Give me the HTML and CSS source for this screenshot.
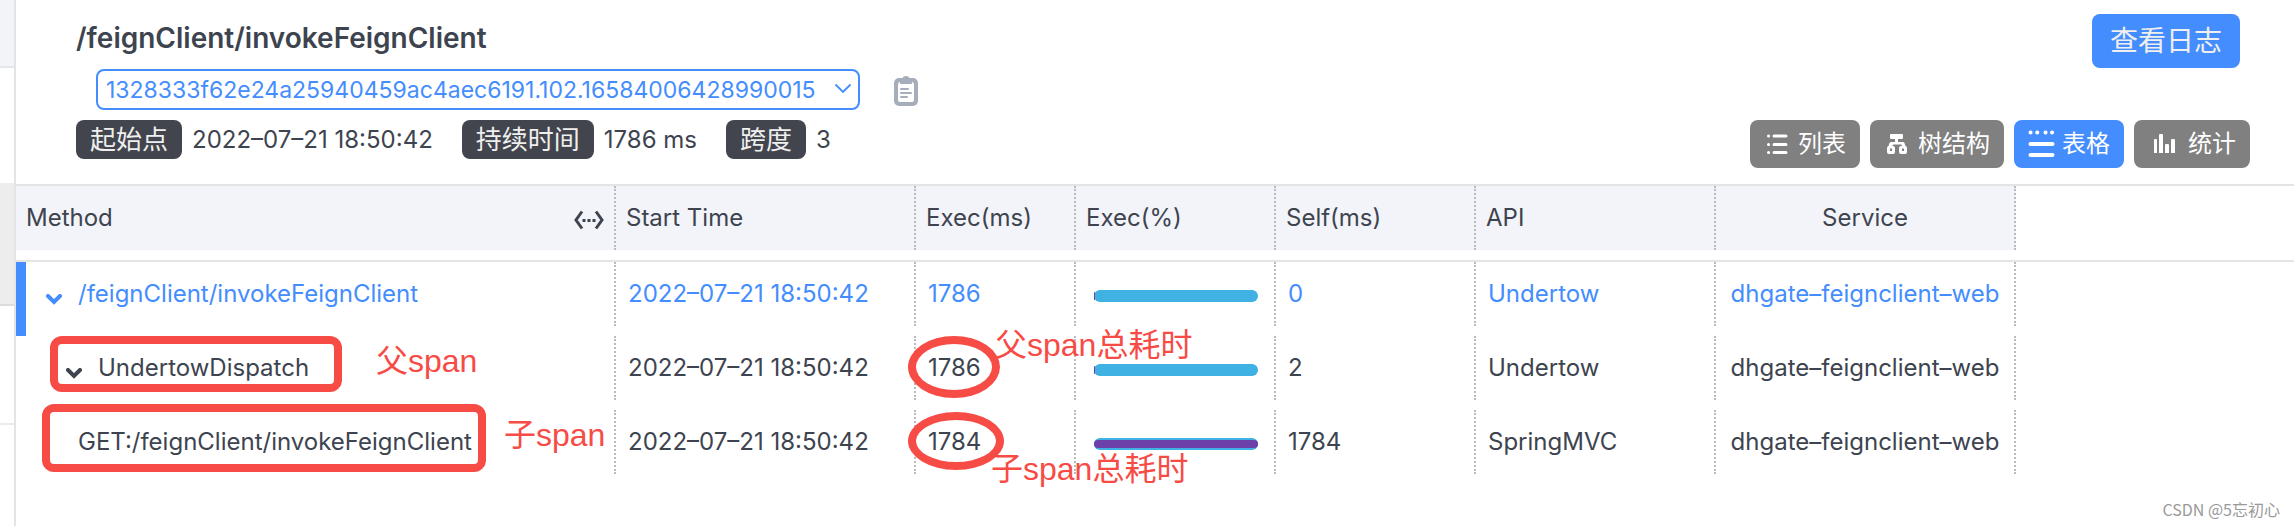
FILE: index.html
```html
<!DOCTYPE html>
<html lang="zh-CN">
<head>
<meta charset="utf-8">
<title>/feignClient/invokeFeignClient</title>
<link rel="stylesheet" href="styles.css">
</head>
<body>
<div class="page">
  <aside class="rail">
    <div class="rail-item rail-head"></div>
    <div class="rail-item rail-trace"></div>
    <div class="rail-item rail-trace rail-selected"></div>
    <div class="rail-item rail-trace rail-last"></div>
  </aside>
  <main class="detail">
    <header class="head">
      <div class="head-info">
        <h1 class="title">/feignClient/invokeFeignClient</h1>
        <div class="trace-line">
          <div class="trace-box">
            <select class="trace-select" aria-label="Trace ID">
              <option>1328333f62e24a25940459ac4aec6191.102.16584006428990015</option>
            </select>
            <svg class="trace-arrow" width="18" height="12" viewBox="0 0 18 12"><path d="M1.5 1.5 9 9l7.500-7.500" fill="none" stroke="#448dfe" stroke-width="1.800"/></svg>
          </div>
          <button class="copy" aria-label="复制">
            <svg width="24" height="30" viewBox="0 0 24 30"><path fill="#a7aebb" d="M5 2h3.500C9 .8 10.300 0 12 0s3 .8 3.500 2H19a5 5 0 0 1 5 5v18a5 5 0 0 1-5 5H5a5 5 0 0 1-5-5V7a5 5 0 0 1 5-5z"/><path fill="#fff" d="M4 8.500Q4 6 6 6v1q0 1 1 1h10q1 0 1-1V6q2 0 2 2.500V24q0 2-2 2H6q-2 0-2-2z"/><path stroke="#a7aebb" stroke-width="2" stroke-linecap="round" d="M7 13h7M7 17h10M7 21h6"/></svg>
          </button>
        </div>
        <div class="facts">
          <span class="tag">起始点</span><span class="fact">2022–07–21 18:50:42</span>
          <span class="tag">持续时间</span><span class="fact">1786 ms</span>
          <span class="tag">跨度</span><span class="fact">3</span>
        </div>
      </div>
      <div class="head-actions">
        <button class="log-btn">查看日志</button>
        <div class="views">
          <button class="view"><svg width="28" height="28" viewBox="0 0 28 28"><g stroke="#fff" stroke-width="3" stroke-linecap="round"><path d="M10 6h12M10 14.500h12M10 22.500h12M4.500 6h.1M4.500 14.500h.1M4.500 22.500h.1"/></g></svg>列表</button>
          <button class="view"><svg width="28" height="28" viewBox="0 0 28 28"><path fill="#fff" fill-rule="evenodd" d="M7 4h11q1 0 1 1v3q0 1-1 1h-4v3h5q1 0 1.500 1l1 3q1.500.5 1.500 2v4q0 2-2 2h-4q-2 0-2-2v-4q0-2 2-2h1l-.5-1.500h-8L8 16h1q2 0 2 2v4q0 2-2 2H5q-2 0-2-2v-4q0-1.500 1.500-2l1-3q.5-1 1.500-1h4V9H7Q6 9 6 8V5q0-1 1-1zM6 18.500V21h2v-2.500zM18 18.500V21h2v-2.500z"/></svg>树结构</button>
          <button class="view view-active"><svg width="28" height="28" viewBox="0 0 28 28"><g stroke="#fff" stroke-width="4" stroke-linecap="round"><path d="M2.500 2.500h.1M9.200 2.500h.1M17.500 2.500h.1M24 2.500h.1M2.500 14h22M2.500 25h22"/></g></svg>表格</button>
          <button class="view view-wide"><svg width="28" height="28" viewBox="0 0 28 28"><path fill="#fff" d="M6 10q0-1 1-1h1q1 0 1 1v13H6zM11 5q0-1 1-1h2q1 0 1 1v18h-4zM17 15q0-1 1-1h2q1 0 1 1v8h-4zM23 10q0-1 1-1h2q1 0 1 1v13h-4z"/></svg>统计</button>
        </div>
      </div>
    </header>

    <table class="spans">
      <colgroup>
        <col class="c-method"><col class="c-start"><col class="c-exec"><col class="c-pct"><col class="c-self"><col class="c-api"><col class="c-service"><col>
      </colgroup>
      <thead>
        <tr>
          <th><div class="cell cell-method">Method
            <svg class="resize" width="30" height="20" viewBox="0 0 30 20"><path d="M8 1.500 2 10l6 8.500M22 1.500 28 10l-6 8.500" fill="none" stroke="#3d444f" stroke-width="3"/><path d="M8.500 9h3v3h-3zM13.500 9h3v3h-3zM18.500 9h3v3h-3z" fill="#3d444f"/></svg></div></th>
          <th><div class="cell">Start Time</div></th>
          <th><div class="cell">Exec(ms)</div></th>
          <th><div class="cell">Exec(%)</div></th>
          <th><div class="cell">Self(ms)</div></th>
          <th><div class="cell">API</div></th>
          <th><div class="cell cell-center">Service</div></th>
          <td></td>
        </tr>
      </thead>
      <tbody>
        <tr class="current">
          <td class="mark"><div class="cell name"><svg class="caret" width="16" height="11" viewBox="0 0 16 11"><path d="m2 2 6 6 6-6" fill="none" stroke="currentColor" stroke-width="4" stroke-linecap="round"/></svg>/feignClient/invokeFeignClient</div></td>
          <td><div class="cell">2022–07–21 18:50:42</div></td>
          <td><div class="cell">1786</div></td>
          <td><div class="cell cell-bar"><div class="bar"><div class="bar-self" style="width:1px"></div></div></div></td>
          <td><div class="cell">0</div></td>
          <td><div class="cell">Undertow</div></td>
          <td><div class="cell cell-center">dhgate–feignclient–web</div></td>
          <td></td>
        </tr>
        <tr>
          <td><div class="cell name name-child"><svg class="caret" width="16" height="11" viewBox="0 0 16 11"><path d="m2 2 6 6 6-6" fill="none" stroke="currentColor" stroke-width="4" stroke-linecap="round"/></svg>UndertowDispatch</div></td>
          <td><div class="cell">2022–07–21 18:50:42</div></td>
          <td><div class="cell">1786</div></td>
          <td><div class="cell cell-bar"><div class="bar"><div class="bar-self" style="width:1px"></div></div></div></td>
          <td><div class="cell">2</div></td>
          <td><div class="cell">Undertow</div></td>
          <td><div class="cell cell-center">dhgate–feignclient–web</div></td>
          <td></td>
        </tr>
        <tr>
          <td><div class="cell name name-leaf">GET:/feignClient/invokeFeignClient</div></td>
          <td><div class="cell">2022–07–21 18:50:42</div></td>
          <td><div class="cell">1784</div></td>
          <td><div class="cell cell-bar"><div class="bar"><div class="bar-self" style="width:100%"></div></div></div></td>
          <td><div class="cell">1784</div></td>
          <td><div class="cell">SpringMVC</div></td>
          <td><div class="cell cell-center">dhgate–feignclient–web</div></td>
          <td></td>
        </tr>
      </tbody>
    </table>
  </main>

  <div class="ring box-parent"></div>
  <div class="ring box-child"></div>
  <div class="ring oval-parent"></div>
  <div class="ring oval-child"></div>
  <div class="note note-parent">父span</div>
  <div class="note note-child">子span</div>
  <div class="note note-parent-time">父span总耗时</div>
  <div class="note note-child-time">子span总耗时</div>
  <div class="watermark">CSDN @5忘初心</div>
</div>
</body>
</html>
```
FILE: styles.css
```css
* { box-sizing: border-box; }

body {
  margin: 0;
  background: #fff;
  color: #3d444f;
  font-family: Inter, "Noto Sans CJK SC", sans-serif;
  font-size: 24px;
  line-height: 32px;
}

button {
  border: 0;
  padding: 0;
  background: none;
  color: #fff;
  font: inherit;
}

.page {
  position: relative;
  display: flex;
  min-height: 100vh;
}

/* left rail */
.rail {
  flex: 0 0 16px;
  border-right: 2px solid #e3e4e6;
}
.rail-item { border-bottom: 2px solid #ebebeb; }
.rail-head {
  height: 68px;
  background: #f3f4f9;
  border-color: #e5e6ea;
}
.rail-trace { height: 117px; border-bottom-color: #ededed; }
.rail-selected {
  height: 121px;
  background: #ededed;
  border-bottom-color: #dcdcdc;
}
.rail-last { height: 119px; border-bottom-color: #ebebeb; }

.detail { flex: 1; min-width: 0; }

/* header */
.head {
  display: flex;
  justify-content: space-between;
  height: 186px;
  padding: 14px 44px 0 60px;
  border-bottom: 2px solid #e4e4e4;
}
.title {
  margin: 0;
  padding-top: 4px;
  font-size: 28px;
  line-height: 40px;
  font-weight: 600;
}
.trace-line {
  display: flex;
  align-items: center;
  gap: 34px;
  margin: 11px 0 10px 20px;
}
.trace-box { position: relative; }
.trace-select {
  display: block;
  width: 764px;
  height: 41px;
  padding: 0 8px;
  border: 2px solid #448dfe;
  border-radius: 8px;
  background: #fff;
  color: #448dfe;
  font: inherit;
  font-size: 23px;
  appearance: none;
}
.trace-arrow {
  position: absolute;
  right: 8px;
  top: 14px;
  pointer-events: none;
}
.copy { display: flex; padding-top: 2px; }
.facts { display: flex; align-items: center; }
.tag {
  height: 39px;
  padding: 0 14px;
  border-radius: 8px;
  background: #42454d;
  color: #efefef;
  font-size: 26px;
  line-height: 39px;
}
.fact { margin: 0 29px 0 10px; }

.head-actions {
  display: flex;
  flex-direction: column;
  align-items: flex-end;
  gap: 52px;
}
.log-btn {
  height: 54px;
  margin-right: 10px;
  padding: 0 18px;
  border-radius: 8px;
  background: #448dfe;
  color: #efefef;
  font-size: 28px;
}
.views { display: flex; gap: 10px; }
.view {
  display: flex;
  align-items: center;
  gap: 6px;
  height: 48px;
  padding: 0 14px;
  border-radius: 8px;
  background: #808080;
}
.view-active { background: #448dfe; }
.view-wide { gap: 12px; }

/* span table */
.spans {
  width: 100%;
  table-layout: fixed;
  border-collapse: collapse;
}
.c-method { width: 600px; }
.c-start, .c-service { width: 300px; }
.c-exec { width: 160px; }
.c-pct, .c-self { width: 200px; }
.c-api { width: 240px; }

.spans th,
.spans td {
  padding: 0 0 10px;
  font-weight: 400;
  text-align: left;
}
.spans thead tr { border-bottom: 2px solid #e4e4e4; }
.cell {
  display: flex;
  align-items: center;
  height: 64px;
  padding: 0 12px;
  border-right: 2px dotted #bbb;
  white-space: nowrap;
}
th .cell { padding: 0 10px; background: #f3f4f9; }
.cell-method { justify-content: space-between; }
.resize { margin-top: 4px; }
.spans .cell-center { justify-content: center; }
.current { color: #448dfe; }
.mark { box-shadow: inset 10px 0 #448dfe; }
.name { gap: 16px; padding-left: 30px; }
.name-child { padding-left: 50px; }
.name-leaf { padding-left: 62px; }
.caret { margin-top: 10px; }
.cell-bar { padding: 4px 16px 0 18px; }
.bar {
  display: flex;
  align-items: center;
  width: 100%;
  height: 12px;
  border-radius: 6px;
  background: #40b1e3;
}
.bar-self {
  height: 8px;
  border-radius: 4px;
  background: #6b41a9;
}

/* annotations over the table */
.ring {
  position: absolute;
  border: 8px solid #f74b46;
  border-radius: 12px;
}
.box-parent { left: 50px; top: 336px; width: 292px; height: 56px; }
.box-child { left: 42px; top: 404px; width: 444px; height: 68px; }
.oval-parent { left: 908px; top: 336px; width: 92px; height: 62px; border-radius: 50%; }
.oval-child { left: 908px; top: 412px; width: 96px; height: 58px; border-radius: 50%; }
.note {
  position: absolute;
  color: #f74b46;
  font-family: "Liberation Sans", "Noto Sans CJK SC", sans-serif;
  font-size: 32px;
  line-height: 40px;
  white-space: nowrap;
}
.note-parent { left: 376px; top: 341px; }
.note-child { left: 504px; top: 415px; }
.note-parent-time { left: 995px; top: 325px; }
.note-child-time { left: 991px; top: 449px; }
.watermark {
  position: absolute;
  right: 14px;
  bottom: 6px;
  color: #999;
  font-family: "Noto Sans CJK SC", sans-serif;
  font-size: 16px;
  line-height: 22px;
}
```
